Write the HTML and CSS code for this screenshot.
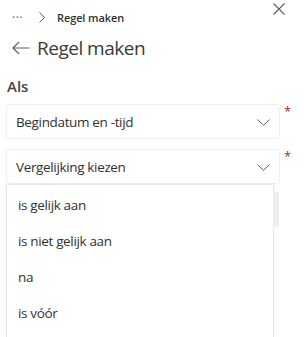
FILE: index.html
```
<!DOCTYPE html>
<html lang="nl">
<head>
<meta charset="utf-8">
<link rel="stylesheet" href="styles.css">
</head>
<body>
<div class="page">
  <div class="topbar">
    <div class="crumbs">
      <span class="dots">&middot;&middot;&middot;</span>
      <svg class="crumb-sep" width="6" height="11" viewBox="0 0 6 11"><path d="M0.5 0.5 L5.5 5.5 L0.5 10.5" fill="none" stroke="#605e5c" stroke-width="1"/></svg>
      <span class="crumb-current">Regel maken</span>
    </div>
    <svg class="close" width="12" height="12" viewBox="0 0 12 12"><path d="M0.5 0.5 L11.5 11.5 M11.5 0.5 L0.5 11.5" fill="none" stroke="#605e5c" stroke-width="1.1"/></svg>
  </div>
  <div class="title">
    <svg class="back" width="18" height="14" viewBox="0 0 18 14"><path d="M17.5 7 H1 M7 1 L1 7 L7 13" fill="none" stroke="#605e5c" stroke-width="1.2"/></svg>
    <span>Regel maken</span>
  </div>
  <div class="label">Als</div>
  <div class="field">
    <div class="dropdown"><span>Begindatum en -tijd</span><svg class="chev" width="13" height="7" viewBox="0 0 13 7"><path d="M0.5 0.5 L6.5 6.3 L12.5 0.5" fill="none" stroke="#605e5c" stroke-width="1"/></svg></div>
    <span class="req">*</span>
  </div>
  <div class="field">
    <div class="dropdown"><span>Vergelijking kiezen</span><svg class="chev" width="13" height="7" viewBox="0 0 13 7"><path d="M0.5 0.5 L6.5 6.3 L12.5 0.5" fill="none" stroke="#605e5c" stroke-width="1"/></svg></div>
    <span class="req">*</span>
  </div>
  <div class="menu">
    <div class="item">is gelijk aan</div>
    <div class="item">is niet gelijk aan</div>
    <div class="item">na</div>
    <div class="item">is vóór</div>
    <div class="thumb"></div>
  </div>
</div>
</body>
</html>
```
FILE: styles.css
```
html, body {
  margin: 0;
  padding: 0;
  background: #fff;
}
body {
  font-family: "Open Sans", "Noto Sans", sans-serif;
  color: #323130;
  width: 304px;
  height: 337px;
  overflow: hidden;
}
.page {
  position: relative;
  padding: 0 6px;
  height: 337px;
  overflow: hidden;
}
.topbar {
  display: flex;
  justify-content: space-between;
  align-items: flex-start;
  height: 30px;
}
.crumbs {
  display: flex;
  align-items: center;
  padding-top: 9px;
  padding-left: 6px;
  height: 16px;
  font-size: 11px;
}
.dots {
  color: #605e5c;
  font-size: 12px;
  letter-spacing: 0.5px;
}
.crumb-sep {
  margin-left: 16px;
  margin-right: 12px;
}
.crumb-current {
  font-weight: 600;
  color: #323130;
  letter-spacing: -0.1px;
}
.close {
  margin-top: 3px;
  margin-right: 13px;
}
.title {
  display: flex;
  align-items: center;
  margin-top: 4px;
  height: 28px;
  font-size: 19px;
  color: #3b3a39;
  letter-spacing: -0.5px;
}
.back {
  margin-left: 6px;
  margin-right: 7px;
}
.label {
  margin-top: 14px;
  height: 20px;
  line-height: 20px;
  font-size: 15px;
  font-weight: 600;
  color: #484644;
  padding-left: 1px;
}
.field {
  display: flex;
  align-items: flex-start;
  margin-top: 8px;
}
.field + .field {
  margin-top: 10px;
}
.dropdown {
  box-sizing: border-box;
  flex: 0 0 274px;
  height: 35px;
  border: 1px solid #f0f0f0;
  border-radius: 3px;
  display: flex;
  align-items: center;
  justify-content: space-between;
  padding: 0 9px 0 9px;
  font-size: 13.5px;
  color: #323130;
  letter-spacing: -0.35px;
}
.chev {
  margin-top: 1px;
}
.req {
  color: #a4262c;
  font-size: 13px;
  line-height: 13px;
  margin-left: 4px;
  margin-top: 1px;
}
.menu {
  position: absolute;
  left: 6px;
  top: 184px;
  width: 268px;
  height: 153px;
  box-sizing: border-box;
  border: 1px solid #e6e6e6;
  border-bottom: none;
  background: #fff;
  padding-top: 2px;
  box-shadow: 0 0 2px rgba(0,0,0,0.06);
}
.item {
  height: 36px;
  line-height: 36px;
  padding-left: 11px;
  font-size: 13.5px;
  color: #323130;
  letter-spacing: -0.35px;
}
.thumb {
  position: absolute;
  left: 100%;
  top: 7px;
  width: 6px;
  height: 35px;
  background: #efefef;
}
```
